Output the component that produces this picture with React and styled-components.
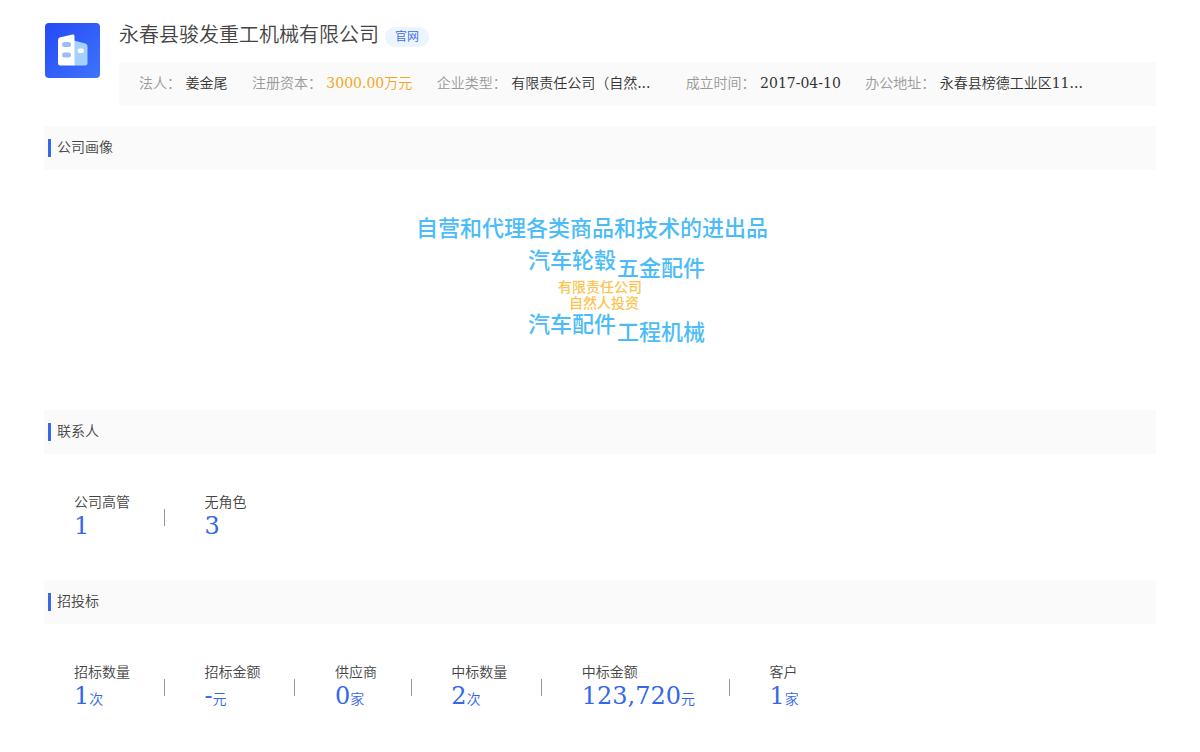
import React from "react";
import styled, { createGlobalStyle } from "styled-components";

const GlobalStyle = createGlobalStyle`
  body {
    margin: 0;
    background: #fff;
    color: #444;
    font-family: "DejaVu Serif", "Noto Sans CJK SC", serif;
    font-size: 14px;
    font-weight: 350;
    line-height: 20px;
  }
`;

const Page = styled.main`
  padding: 20px 44px;
`;

const Header = styled.header`
  display: flex;
  gap: 19px;
  margin-bottom: 20px;
`;

const Logo = styled.svg`
  flex: none;
  width: 56px;
  height: 56px;
  margin-top: 2px;
`;

const HeaderMain = styled.div`
  flex: 1;
  min-width: 0;
`;

const TitleRow = styled.div`
  display: flex;
  align-items: center;
  gap: 6px;
  height: 30px;
  margin-bottom: 12px;
`;

const Title = styled.h1`
  margin: 0;
  font-size: 20px;
  font-weight: inherit;
  line-height: 30px;
`;

const SiteLink = styled.a`
  margin-top: 4px;
  padding: 0 10px;
  border-radius: 10px;
  background: #ecf4fe;
  color: #3568e8;
  font-size: 12px;
  line-height: 20px;
  text-decoration: none;
`;

const Info = styled.div`
  padding: 11px 20px 13px;
  background: #fafafa;
`;

const InfoItem = styled.span`
  display: inline-block;
  margin-right: 20px;
  vertical-align: top;
`;

const InfoLabel = styled.span`
  color: #999;
  vertical-align: top;
`;

const InfoValue = styled.span`
  display: inline-block;
  min-width: ${(props) => (props.$wide ? "150px" : "0")};
  color: ${(props) => (props.$accent ? "#f5a623" : "#333")};
  vertical-align: top;
`;

const SectionTitle = styled.h2`
  display: flex;
  align-items: flex-start;
  gap: 6px;
  margin: 0;
  padding: 13px 4px;
  background: #fafafa;
  font-size: 14px;
  font-weight: inherit;
  line-height: 16px;

  &::before {
    content: "";
    width: 3px;
    height: 18px;
    background: #3568e8;
  }
`;

const Cloud = styled.div`
  position: relative;
  height: 240px;
`;

const Word = styled.span`
  position: absolute;
  top: ${(props) => props.$y}px;
  left: calc(50% + ${(props) => props.$x}px);
  color: ${(props) => (props.$small ? "#fac44f" : "#4cbcf8")};
  font-family: "Noto Sans CJK SC", sans-serif;
  font-size: ${(props) => (props.$small ? 14 : 22)}px;
  font-weight: 500;
  line-height: ${(props) => (props.$small ? 14 : 22)}px;
  white-space: nowrap;
`;

const Stats = styled.div`
  padding: 38px 30px 40px;
`;

const Stat = styled.div`
  display: inline-flex;
  align-items: center;
  margin-right: 35px;
  vertical-align: top;

  &:not(:last-child)::after {
    content: "";
    width: 1px;
    height: 17px;
    margin: 2px 0 0 34px;
    background: #999;
  }
`;

const StatLabel = styled.div`
  line-height: 20px;
`;

const StatValue = styled.div`
  color: #3568e8;
  font-size: 24px;
  line-height: 28px;
`;

const Unit = styled.span`
  font-size: 14px;
  line-height: 14px;
`;

const info = [
  { label: "法人：", value: "姜金尾" },
  { label: "注册资本：", value: "3000.00万元", accent: true },
  { label: "企业类型：", value: "有限责任公司（自然...", wide: true },
  { label: "成立时间：", value: "2017-04-10" },
  { label: "办公地址：", value: "永春县榜德工业区11...", wide: true },
];

// x is measured from the middle of the cloud, y from its top
const words = [
  { text: "自营和代理各类商品和技术的进出品", x: -184, y: 45 },
  { text: "汽车轮毂", x: -72, y: 77 },
  { text: "五金配件", x: 17, y: 85 },
  { text: "有限责任公司", x: -42, y: 109, small: true },
  { text: "自然人投资", x: -31, y: 125, small: true },
  { text: "汽车配件", x: -72, y: 141 },
  { text: "工程机械", x: 17, y: 149 },
];

const contacts = [
  { label: "公司高管", value: "1" },
  { label: "无角色", value: "3" },
];

const bids = [
  { label: "招标数量", value: "1", unit: "次" },
  { label: "招标金额", value: "-", unit: "元" },
  { label: "供应商", value: "0", unit: "家" },
  { label: "中标数量", value: "2", unit: "次" },
  { label: "中标金额", value: "123,720", unit: "元" },
  { label: "客户", value: "1", unit: "家" },
];

function CompanyLogo() {
  return (
    <Logo viewBox="0 0 56 56" aria-hidden="true">
      <defs>
        <linearGradient id="logoBg" x1="0" y1="0" x2="1" y2="1">
          <stop offset="0" stopColor="#2449f6" />
          <stop offset="1" stopColor="#3e74fb" />
        </linearGradient>
      </defs>
      <rect x="1" y="1" width="55" height="55" rx="4" fill="url(#logoBg)" />
      <path d="M30 18.5 41.5 21.5Q43.500 22 43.500 24V41Q43.500 43.500 41 43.500H30Z" fill="#a5cffc" />
      <path d="M15.500 15.500 28.500 12.500Q30.500 12 30.500 14V43.500H16.500Q14 43.500 14 41V18Q14 16 15.500 15.500Z" fill="#fff" />
      <rect x="18" y="20" width="9" height="5" rx="2.500" fill="#9cbcf5" />
      <rect x="18" y="30.500" width="9" height="5" rx="2.500" fill="#9cbcf5" />
      <rect x="33.500" y="26.500" width="6.500" height="4.500" rx="2.200" fill="#fff" />
    </Logo>
  );
}

function StatList({ items }) {
  return (
    <Stats>
      {items.map((item) => (
        <React.Fragment key={item.label}>
          <Stat>
            <div>
              <StatLabel>{item.label}</StatLabel>
              <StatValue>
                {item.value}
                {item.unit && <Unit>{item.unit}</Unit>}
              </StatValue>
            </div>
          </Stat>{" "}
        </React.Fragment>
      ))}
    </Stats>
  );
}

export default function App() {
  return (
    <>
      <GlobalStyle />
      <Page lang="zh-CN">
        <Header>
          <CompanyLogo />
          <HeaderMain>
            <TitleRow>
              <Title>永春县骏发重工机械有限公司</Title>
              <SiteLink href="#">官网</SiteLink>
            </TitleRow>
            <Info>
              {info.map((item) => (
                <React.Fragment key={item.label}>
                  <InfoItem>
                    <InfoLabel>{item.label}</InfoLabel>{" "}
                    <InfoValue $wide={item.wide} $accent={item.accent}>
                      {item.value}
                    </InfoValue>
                  </InfoItem>{" "}
                </React.Fragment>
              ))}
            </Info>
          </HeaderMain>
        </Header>

        <section>
          <SectionTitle>公司画像</SectionTitle>
          <Cloud>
            {words.map((word) => (
              <Word key={word.text} $x={word.x} $y={word.y} $small={word.small}>
                {word.text}
              </Word>
            ))}
          </Cloud>
        </section>

        <section>
          <SectionTitle>联系人</SectionTitle>
          <StatList items={contacts} />
        </section>

        <section>
          <SectionTitle>招投标</SectionTitle>
          <StatList items={bids} />
        </section>
      </Page>
    </>
  );
}
